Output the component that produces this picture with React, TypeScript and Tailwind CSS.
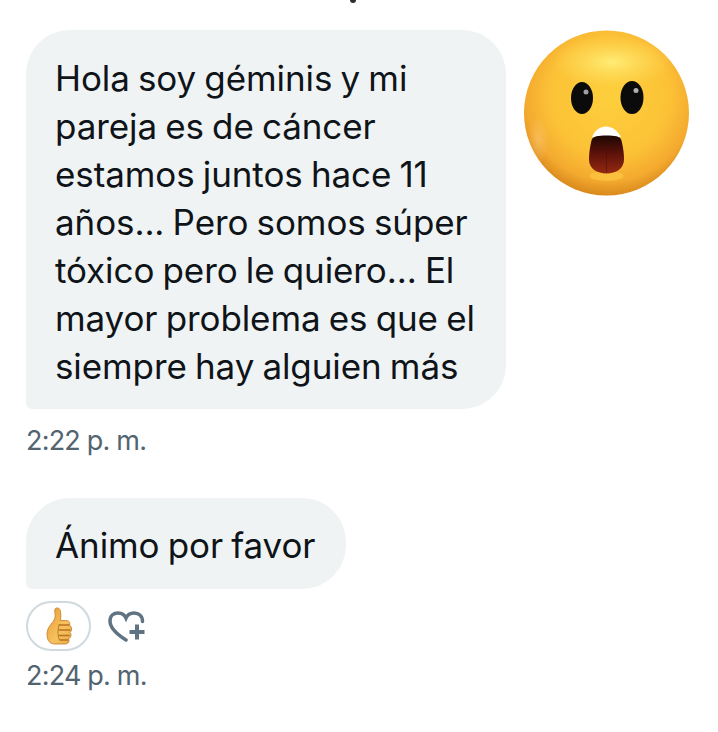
import React from "react";

const font = { fontFamily: '"Inter", "Liberation Sans", sans-serif' };

function Wow() {
  return (
    <svg width="166" height="167" viewBox="0 0 166 167" className="shrink-0">
      <defs>
        <radialGradient id="face" cx="0.52" cy="0.4" r="0.6">
          <stop offset="0" stopColor="#fdcf3c" />
          <stop offset="0.6" stopColor="#fcc237" />
          <stop offset="0.85" stopColor="#f4aa2f" />
          <stop offset="1" stopColor="#d98a1c" />
        </radialGradient>
        <radialGradient id="hi" cx="0.5" cy="0.5" r="0.5">
          <stop offset="0" stopColor="#ffee78" stopOpacity="0.95" />
          <stop offset="1" stopColor="#ffe060" stopOpacity="0" />
        </radialGradient>
        <radialGradient id="rim" cx="0.5" cy="0.5" r="0.5">
          <stop offset="0" stopColor="#ffd9a0" stopOpacity="0.35" />
          <stop offset="1" stopColor="#ffd9a0" stopOpacity="0" />
        </radialGradient>
        <linearGradient id="mouth" x1="0" y1="0" x2="0" y2="1">
          <stop offset="0" stopColor="#1c0704" />
          <stop offset="0.45" stopColor="#5a1109" />
          <stop offset="1" stopColor="#962a12" />
        </linearGradient>
      </defs>
      <circle cx="82.500" cy="83" r="82.500" fill="url(#face)" />
      <ellipse cx="88" cy="32" rx="60" ry="26" fill="url(#hi)" />
      <ellipse cx="14" cy="110" rx="11" ry="24" fill="url(#rim)" />
      <ellipse cx="58" cy="68" rx="11" ry="16" fill="#0c0b0c" />
      <ellipse cx="108" cy="67.500" rx="11.500" ry="16.500" fill="#0c0b0c" />
      <circle cx="62" cy="62" r="2.500" fill="#a0a0a0" />
      <circle cx="112" cy="60.500" r="2.500" fill="#b0b0b0" />
      <ellipse cx="82.500" cy="146" rx="17" ry="5" fill="#ffd24a" opacity="0.5" />
      <path d="M68 107C71 100 76 96.500 82 96.500S93 100 97 107z" fill="#ffffff" />
      <path d="M82.500 105.500c-8 0-14 .5-15 5c-2 8-2.500 14-2.500 19c0 9 8 14 17.500 14s17.500-5 17.500-14c0-5-.5-11-2.500-19c-1-4.500-7-5-15-5z" fill="url(#mouth)" />
      <path d="M82.500 122V142" stroke="#4f0f08" strokeWidth="1" opacity="0.6" />
    </svg>
  );
}

function Thumb() {
  return (
    <svg width="26" height="38" viewBox="0 0 26 38">
      <defs>
        <linearGradient id="th" x1="0" y1="0" x2="1" y2="1">
          <stop offset="0" stopColor="#ea9a30" />
          <stop offset="0.6" stopColor="#f6c25f" />
          <stop offset="1" stopColor="#eaa944" />
        </linearGradient>
      </defs>
      <path d="M8 13C6 17 1 20 1 27c0 7 3 10 8 10h10c2.500 0 4-1.500 4-3.500 0-1-.5-2-.5-2 2-.5 2.500-2 2.500-3.500 0-1-.5-2-1-2.500 1-1 1.500-2 1.500-3.500 0-1.500-.5-3-2-3.500.5-1 .5-2 0-3-.5-1.500-2-2-4-2h-5c.5-3 .5-6 0-9C14 1.500 12 0.500 10.500 1 8.500 1.500 8.500 3.500 9 6c.5 3 0 5-1 7z" fill="url(#th)" stroke="#c07a24" strokeWidth="0.8" />
      <path d="M13 18h10M13 23h11M13 28.500h10M14 33h8" stroke="#b9721f" strokeWidth="1.300" fill="none" strokeLinecap="round" />
      <path d="M13 18c-1.500 5-1.500 11 .5 15" stroke="#b9721f" strokeWidth="0.9" fill="none" />
    </svg>
  );
}

function HeartPlus() {
  return (
    <svg width="37" height="31" viewBox="0 0 37 31" fill="none">
      <path d="M18 29C10 24 2 17 2 10C2 4.500 5.500 2 10 2C13.500 2 16.500 3.500 18 7C19.500 3.500 22.500 2 26 2C31 2 34.500 5 34.500 10.500" stroke="#5f7382" strokeWidth="3.500" strokeLinecap="round" />
      <path d="M29 13.500V28.500M21.500 21H36.500" stroke="#5f7382" strokeWidth="4" />
    </svg>
  );
}

export default function App() {
  return (
    <div className="relative w-[718px] h-[732px] bg-white overflow-hidden text-[#0f1419]" style={font}>
      <div className="absolute left-[350px] top-0 w-[6px] h-[3px] bg-[#2b2f33] rounded-b-[3px]" />
      <div className="pl-[26px] pt-[30px] flex flex-col">
        <div className="flex gap-[18px] items-start">
          <div className="w-[480px] h-[379px] bg-[#eff3f4] rounded-[44px] rounded-bl-[6px] pl-[29px] pt-[24px] text-[35px] leading-[48px] tracking-[-0.1px] [word-spacing:-1.5px]">
            <div>Hola soy géminis y mi</div>
            <div>pareja es de cáncer</div>
            <div>estamos juntos hace 11</div>
            <div>años... Pero somos súper</div>
            <div>tóxico pero le quiero... El</div>
            <div>mayor problema es que el</div>
            <div>siempre hay alguien más</div>
          </div>
          <Wow />
        </div>
        <div className="mt-[15px] text-[#536471] text-[27px] leading-[34px] tracking-[-0.8px]">2:22 p. m.</div>
        <div className="mt-[40px] w-[320px] h-[91px] bg-[#eff3f4] rounded-[44px] rounded-bl-[6px] pl-[29px] pt-[4px] flex items-center text-[35px] tracking-[-0.1px] [word-spacing:-1.5px]">
          Ánimo por favor
        </div>
        <div className="mt-[12px] flex items-center gap-[17px]">
          <div className="w-[65px] h-[50px] rounded-full border-2 border-[#cfd9de] flex items-center justify-center">
            <Thumb />
          </div>
          <HeartPlus />
        </div>
        <div className="mt-[8px] text-[#536471] text-[27px] leading-[34px] tracking-[-0.8px]">2:24 p. m.</div>
      </div>
    </div>
  );
}
